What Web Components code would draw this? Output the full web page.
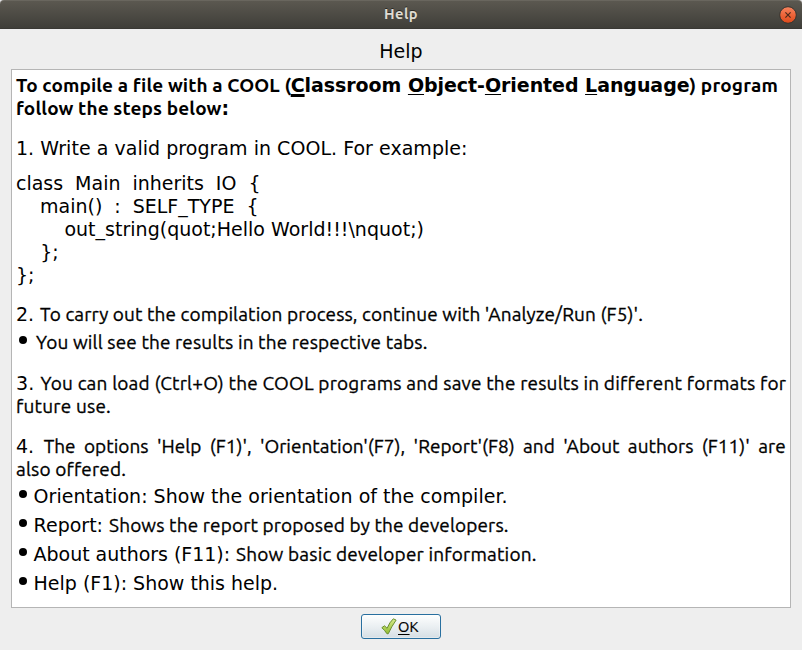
<!DOCTYPE html>
<html lang="en"><head><meta charset="utf-8"><title>Help</title>
<style>html,body{margin:0;background:#e4e4e6}body{width:802px;height:650px;overflow:hidden}</style></head>
<body><help-dialog></help-dialog>
<script>
// A run of text whose tracking is adjusted to fill the width in "w".
customElements.define('text-run', class extends HTMLElement {
  connectedCallback() {
    this.attachShadow({mode: 'open'}).innerHTML = `<style>
      :host{display:inline-block;white-space:pre;line-height:0;font-family:Ubuntu,"Noto Sans",sans-serif;font-size:19px;-webkit-text-stroke:.3px #000}
      :host([face=wide]){font-family:"DejaVu Sans",sans-serif;font-size:19px;-webkit-text-stroke:0}
      :host([bold]){font-weight:700;-webkit-text-stroke:0}
      :host([loose]){word-spacing:4px}
    </style><slot></slot>`;
  }
  fit() {
    const w = parseFloat(this.getAttribute('w'));
    if (!w) return;
    const natural = this.getBoundingClientRect().width;
    this.style.letterSpacing = (w - natural) / this.textContent.length + 'px';
    this.style.width = w + 'px';
  }
});
customElements.define('help-line', class extends HTMLElement {
  connectedCallback() {
    const bullet = this.hasAttribute('bullet');
    this.attachShadow({mode: 'open'}).innerHTML = `<style>
      :host{display:flex;height:23px;line-height:23px;white-space:pre;margin-top:var(--gap,0px)}
      .dot{width:8px;height:8px;border-radius:50%;background:#000;margin:4.5px var(--after,7px) 0 3px;flex:none}
      .body{flex:none}
    </style>${bullet ? '<span class="dot"></span>' : ''}<span class="body"><slot></slot></span>`;
  }
});
customElements.define('title-bar', class extends HTMLElement {
  connectedCallback() {
    this.attachShadow({mode: 'open'}).innerHTML = `<style>
      :host{display:grid;grid-template-columns:1fr auto 1fr;align-items:center;height:29px;box-sizing:border-box;border-top:1px solid #69665e;border-bottom:1px solid #393834;border-radius:4px 4px 0 0;background:linear-gradient(#5b5850,#3f3e39)}
      .t{grid-column:2;color:#dfdbd2;font:bold 14.67px/24px Ubuntu,"Noto Sans",sans-serif;letter-spacing:.4px;text-shadow:0 -1px #292824;padding-bottom:2px}
      svg{justify-self:end;margin-right:4px;display:block}
    </style><span class="t"><slot></slot></span>
    <svg width="20" height="20" viewBox="0 0 20 20"><defs><linearGradient id="g" x2="0" y2="1"><stop stop-color="#f68560"/><stop offset=".55" stop-color="#ec6236"/><stop offset="1" stop-color="#dc491a"/></linearGradient></defs>
    <circle cx="10" cy="10" r="8.3" fill="url(#g)" stroke="#35342f" stroke-width="1"/><path d="M7.4 7.4l5.2 5.2M12.6 7.4l-5.2 5.2" stroke="#4b2a1b" stroke-width="1.2"/></svg>`;
  }
});
customElements.define('ok-button', class extends HTMLElement {
  connectedCallback() {
    this.attachShadow({mode: 'open'}).innerHTML = `<style>
      :host{display:flex;box-sizing:border-box;width:80px;height:25px;border:1px solid #286f9f;border-radius:3px;background:linear-gradient(#fdfefe,#e9eef1 55%,#d5dee4);padding:3px 0 0 19px;box-shadow:inset 0 0 0 1px #ffffff55}
      .l{font:14.67px/17px Ubuntu,"Noto Sans",sans-serif;color:#000;margin-left:1px;letter-spacing:.2px;-webkit-text-stroke:.2px #000}
      svg{display:block;flex:none}
    </style><svg width="16" height="17" viewBox="0 0 16 17"><defs><linearGradient id="c" x2="0" y2="1"><stop stop-color="#d9ec8d"/><stop offset="1" stop-color="#91bd32"/></linearGradient></defs><path d="M.8 9.7L3.5 7.8l2.6 2.5Q8.6 4.1 12.3.8l2.8 1.3Q10.3 8.8 7.3 15.7L6 15.8Q3.7 12.1.8 9.7z" fill="url(#c)" stroke="#6b8e31" stroke-width="1" stroke-linejoin="round"/></svg><span class="l"><slot></slot></span>`;
  }
});
customElements.define('help-dialog', class extends HTMLElement {
  connectedCallback() {
    this.attachShadow({mode: 'open'}).innerHTML = `<style>
      :host{display:flex;flex-direction:column;width:802px;height:650px;color:#000;font:19px "DejaVu Sans",sans-serif}
      main{flex:1;display:flex;flex-direction:column;align-items:center;background:#eee}
      h1{margin:0;font:19px/23px "DejaVu Sans",sans-serif;height:29px;padding-top:11px}
      article{box-sizing:border-box;width:780px;height:539px;border:1px solid #b5b5b5;background:#fff;padding:4px 4px 0}
      ok-button{margin-top:6px}
      u{text-decoration:underline;text-decoration-thickness:1px;text-underline-offset:2px;text-decoration-skip-ink:none}
      u.thick{text-decoration-thickness:3px}
      u.key{text-underline-offset:2px}
    </style>
    <title-bar>Help</title-bar>
    <main><h1>Help</h1>
    <article>
      <help-line><text-run bold w="274.7">To compile a file with a COOL (</text-run><text-run face="wide" bold w="398.8"><u class="thick">C</u>lassroom <u>O</u>bject-<u>O</u>riented <u>L</u>anguage</text-run><text-run bold w="88.5">) program</text-run></help-line>
      <help-line><text-run bold w="205.5">follow the steps below</text-run><text-run face="wide" bold>:</text-run></help-line>
      <help-line style="--gap:17px"><text-run face="wide" w="451.5">1. Write a valid program in COOL. For example:</text-run></help-line>
      <help-line style="--gap:12px"><text-run face="wide" w="244.5">class  Main  inherits  IO  {</text-run></help-line>
      <help-line><text-run face="wide" w="242.5">    main()  :  SELF_TYPE  {</text-run></help-line>
      <help-line><text-run face="wide" w="408">        out_string(quot;Hello World!!!\\nquot;)</text-run></help-line>
      <help-line>    };</help-line>
      <help-line>};</help-line>
      <help-line style="--gap:16px"><text-run face="wide" w="24">2. </text-run><text-run w="603">To carry out the compilation process, continue with 'Analyze/Run (F5)'.</text-run></help-line>
      <help-line bullet style="--gap:5px;--after:9px"><text-run w="391.5">You will see the results in the respective tabs.</text-run></help-line>
      <help-line style="--gap:18px"><text-run face="wide" w="24.4">3. </text-run><text-run w="745.8">You can load (Ctrl+O) the COOL programs and save the results in different formats for</text-run></help-line>
      <help-line><text-run w="95">future use.</text-run></help-line>
      <help-line style="--gap:17px"><text-run face="wide" style="margin-right:9.5px">4.</text-run><text-run loose w="742">The options 'Help (F1)', 'Orientation'(F7), 'Report'(F8) and 'About authors (F11)' are</text-run></help-line>
      <help-line><text-run w="110">also offered.</text-run></help-line>
      <help-line bullet style="--gap:4px;--after:6.6px"><text-run face="wide" w="474">Orientation: Show the orientation of the compiler.</text-run></help-line>
      <help-line bullet style="--gap:6px;--after:6.6px"><text-run face="wide" w="75.5">Report: </text-run><text-run w="399.5">Shows the report proposed by the developers.</text-run></help-line>
      <help-line bullet style="--gap:6px;--after:6.6px"><text-run face="wide" w="202.5">About authors (F11): </text-run><text-run w="300.5">Show basic developer information.</text-run></help-line>
      <help-line bullet style="--gap:6px;--after:6.6px"><text-run face="wide" w="244.5">Help (F1): Show this help.</text-run></help-line>
    </article>
    <ok-button><u class="key">O</u>K</ok-button></main>`;
    this.shadowRoot.querySelectorAll('text-run').forEach(r => r.fit());
  }
});
</script></body></html>
